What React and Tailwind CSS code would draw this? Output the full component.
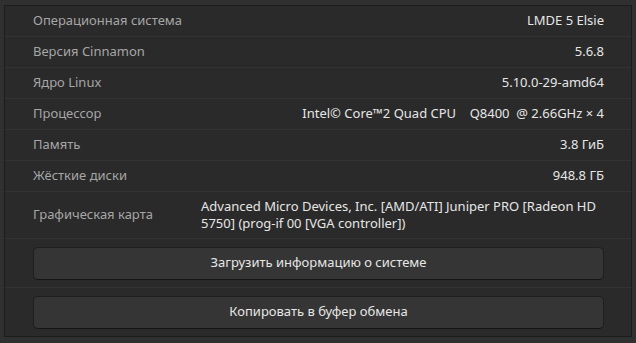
import React from "react";

const rows = [
  { label: "Операционная система", value: "LMDE 5 Elsie" },
  { label: "Версия Cinnamon", value: "5.6.8" },
  { label: "Ядро Linux", value: "5.10.0-29-amd64" },
  { label: "Процессор", value: "Intel© Core™2 Quad CPU    Q8400  @ 2.66GHz × 4" },
  { label: "Память", value: "3.8 ГиБ" },
  { label: "Жёсткие диски", value: "948.8 ГБ" },
];

const InfoRow = ({ label, value }) => (
  <div className="flex h-[31px] items-center justify-between border-b border-[#333333] pl-[28px] pr-[27px]">
    <span className="text-[#a6a6a6]">{label}</span>
    <span className="whitespace-pre text-[#e6e6e6]">{value}</span>
  </div>
);

const ActionButton = ({ children }) => (
  <button className="h-[33px] w-full rounded-[5px] border border-[#1f1f1f] border-b-[#151515] bg-[#353535] text-[#e6e6e6]">
    {children}
  </button>
);

const App = () => {
  return (
    <div
      className="h-[343px] w-[636px] bg-[#303030] pb-[6px] pl-[4px] pr-[4px] pt-[5px] text-[13px]"
      style={{ fontFamily: "'Noto Sans', 'DejaVu Sans', sans-serif" }}
    >
      <div className="flex h-full flex-col border border-[#1c1c1c] bg-[#2a2a2a]">
        {rows.map((r) => (
          <InfoRow key={r.label} label={r.label} value={r.value} />
        ))}
        <div className="flex h-[47px] items-center border-b border-[#333333] pl-[28px] pr-[27px]">
          <span className="w-[168px] text-[#a6a6a6]">Графическая карта</span>
          <span className="flex-1 leading-[17px] text-[#e6e6e6]">
            Advanced Micro Devices, Inc. [AMD/ATI] Juniper PRO [Radeon HD 5750] (prog-if 00 [VGA controller])
          </span>
        </div>
        <div className="flex h-[49px] items-center border-b border-[#333333] pl-[28px] pr-[27px]">
          <ActionButton>Загрузить информацию о системе</ActionButton>
        </div>
        <div className="flex flex-1 items-center pl-[28px] pr-[27px]">
          <ActionButton>Копировать в буфер обмена</ActionButton>
        </div>
      </div>
    </div>
  );
};

export default App;
